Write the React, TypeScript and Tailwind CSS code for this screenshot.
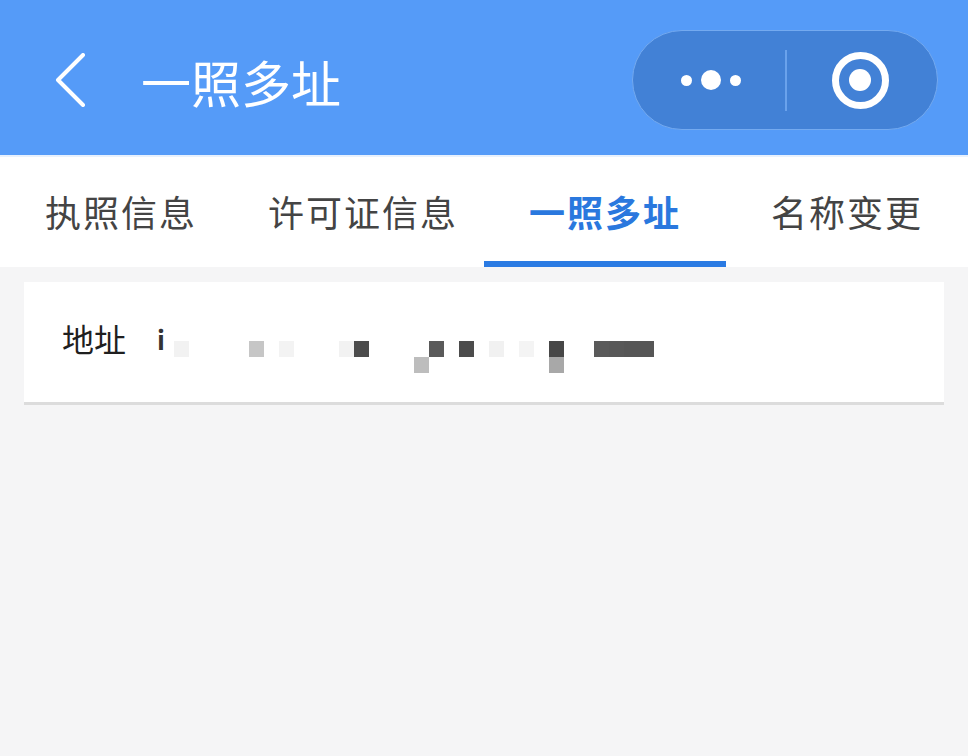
import React from 'react';

const tabs = ['执照信息', '许可证信息', '一照多址', '名称变更'];

// mosaic cells of the redacted address: [column, top colour, bottom colour]
const mosaic: [number, string, string][] = [
  [0, '#f2f2f2', ''],
  [5, '#c6c6c6', ''],
  [7, '#f3f3f3', ''],
  [11, '#f2f2f2', ''],
  [12, '#4c4c4c', ''],
  [16, '', '#bdbdbd'],
  [17, '#5a5a5a', ''],
  [19, '#4c4c4c', ''],
  [21, '#f1f1f1', ''],
  [23, '#f4f4f4', ''],
  [25, '#474747', '#a8a8a8'],
  [28, '#5a5a5a', ''],
  [29, '#585858', ''],
  [30, '#565656', ''],
  [31, '#565656', ''],
];

function Mosaic() {
  const cols = Array.from({ length: 32 }, (_, i) => {
    const cell = mosaic.find((m) => m[0] === i);
    return { top: cell ? cell[1] : '', bottom: cell ? cell[2] : '' };
  });
  return (
    <div className="flex mt-[14px]">
      {cols.map((c, i) => (
        <div key={i} className="flex flex-col">
          <div className="w-[15px] h-[16px]" style={{ background: c.top || 'transparent' }} />
          <div className="w-[15px] h-[16px]" style={{ background: c.bottom || 'transparent' }} />
        </div>
      ))}
    </div>
  );
}

export default function App() {
  return (
    <div
      className="w-[968px] h-[756px] bg-[#f5f5f6] overflow-hidden"
      style={{ fontFamily: '"Noto Sans CJK SC", "Noto Sans", sans-serif' }}
    >
      {/* Top bar */}
      <div className="h-[155px] bg-[#559bf8] flex items-center pl-[52px] pr-[30px] pt-[5px]">
        <svg width="36" height="54" viewBox="0 0 36 54" className="shrink-0">
          <path d="M31 2 L6 27 L31 52" fill="none" stroke="#fff" strokeWidth="4" strokeLinejoin="round" strokeLinecap="round" />
        </svg>
        <h1 className="ml-[53px] text-[50px] leading-none text-white font-normal mt-[2px]">一照多址</h1>
        <div className="ml-auto w-[306px] h-[100px] rounded-full bg-[#4281d6] border border-[#74aaf0] flex items-center">
          <div className="flex-1 flex items-center justify-center gap-[9px] pl-[4px]">
            <span className="w-[11px] h-[11px] rounded-full bg-white" />
            <span className="w-[20px] h-[20px] rounded-full bg-white" />
            <span className="w-[11px] h-[11px] rounded-full bg-white" />
          </div>
          <div className="w-[2px] h-[61px] bg-[#6aa2ec]" />
          <div className="flex-1 flex items-center justify-center pr-[3px]">
            <div className="w-[57px] h-[57px] rounded-full border-[7px] border-white flex items-center justify-center">
              <div className="w-[22px] h-[22px] rounded-full bg-white" />
            </div>
          </div>
        </div>
      </div>
      <div className="h-[2px] bg-[#e8f1fd]" />

      {/* Tabs */}
      <div className="grid grid-cols-4 bg-white h-[110px]">
        {tabs.map((t, i) => (
          <div key={t} className="flex flex-col">
            <div
              className={
                'flex-1 flex items-center justify-center text-[36px] tracking-[2px] pt-[4px] ' +
                (i === 2 ? 'text-[#2a78de] font-bold' : 'text-[#444444]')
              }
            >
              {t}
            </div>
            <div className={'h-[6px] ' + (i === 2 ? 'bg-[#2b7be3]' : 'bg-white')} />
          </div>
        ))}
      </div>

      {/* Address card */}
      <div className="mx-[24px] mt-[15px] h-[123px] bg-white border-b-[3px] border-[#dcdcdc] flex items-start pl-[38px] pt-[40px]">
        <span className="text-[32px] leading-none text-[#1f1f1f]">地址</span>
        <span className="ml-[31px] mt-[4px] text-[26px] leading-none text-[#333] font-bold">i</span>
        <div className="ml-[9px] mt-[5px]">
          <Mosaic />
        </div>
      </div>
    </div>
  );
}
